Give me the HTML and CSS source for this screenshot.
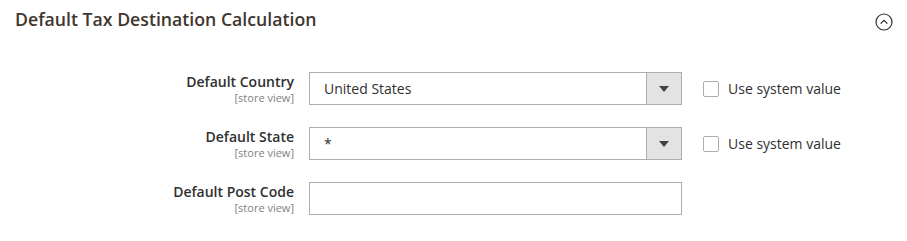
FILE: index.html
```html
<!DOCTYPE html>
<html>
<head>
    <link rel="stylesheet" href="styles.css">
</head>
<body>
    <div class="section">
        <div class="section-head">
            <span class="section-title">Default Tax Destination Calculation</span>
            <span class="collapse-icon">
                <svg width="18" height="18" viewBox="0 0 18 18">
                    <circle cx="9" cy="9" r="8" fill="none" stroke="#303030" stroke-width="1.2"/>
                    <path d="M5.6 10.6 L9 7.4 L12.4 10.6" fill="none" stroke="#303030" stroke-width="1.3"/>
                </svg>
            </span>
        </div>
        <div class="form-rows">
            <div class="row">
                <div class="label">
                    <span class="label-text">Default Country</span>
                    <span class="scope">[store view]</span>
                </div>
                <div class="control select">
                    <span class="value">United States</span>
                    <span class="select-btn"><span class="arrow"></span></span>
                </div>
                <label class="use-default">
                    <span class="checkbox"></span>
                    <span>Use system value</span>
                </label>
            </div>
            <div class="row">
                <div class="label">
                    <span class="label-text">Default State</span>
                    <span class="scope">[store view]</span>
                </div>
                <div class="control select">
                    <span class="value">*</span>
                    <span class="select-btn"><span class="arrow"></span></span>
                </div>
                <label class="use-default">
                    <span class="checkbox"></span>
                    <span>Use system value</span>
                </label>
            </div>
            <div class="row">
                <div class="label">
                    <span class="label-text">Default Post Code</span>
                    <span class="scope">[store view]</span>
                </div>
                <div class="control input"></div>
            </div>
        </div>
    </div>
</body>
</html>
```

FILE: styles.css
```css
body {
    margin: 0;
    background-color: rgb(255, 255, 255);
    font-family: "Open Sans", "Liberation Sans", sans-serif;
    color: rgb(48, 48, 48);
}
.section {
    width: 907px;
    height: 241px;
}
.section-head {
    display: flex;
    align-items: center;
    justify-content: space-between;
    padding: 7px 14px 0 15px;
    height: 24px;
}
.section-title {
    font-size: 17.7px;
    font-weight: 600;
    color: rgb(65, 54, 47);
}
.collapse-icon {
    display: flex;
    margin-top: 6px;
}
.form-rows {
    display: flex;
    flex-direction: column;
    gap: 22px;
    padding-top: 41px;
}
.row {
    display: flex;
    align-items: flex-start;
}
.label {
    width: 294px;
    display: flex;
    flex-direction: column;
    align-items: flex-end;
    padding-top: 1px;
}
.label-text {
    font-size: 14px;
    font-weight: 600;
    line-height: 18px;
}
.scope {
    font-size: 11px;
    line-height: 13px;
    color: rgb(128, 128, 128);
}
.control {
    margin-left: 15px;
    width: 373px;
    height: 33px;
    border: 1px solid rgb(173, 173, 173);
    box-sizing: border-box;
    background-color: rgb(255, 255, 255);
}
.select {
    display: flex;
    align-items: center;
    justify-content: space-between;
}
.value {
    padding-left: 14px;
    font-size: 14px;
}
.select-btn {
    width: 34px;
    height: 31px;
    border-left: 1px solid rgb(173, 173, 173);
    background-color: rgb(227, 227, 227);
    display: flex;
    align-items: center;
    justify-content: center;
}
.arrow {
    width: 0;
    height: 0;
    border-left: 5px solid transparent;
    border-right: 5px solid transparent;
    border-top: 6px solid rgb(65, 65, 65);
    margin-top: 1px;
}
.use-default {
    display: flex;
    align-items: center;
    margin-left: 21px;
    height: 33px;
    font-size: 14px;
    color: rgb(48, 48, 48);
}
.checkbox {
    width: 16px;
    height: 16px;
    border: 1px solid rgb(173, 173, 173);
    border-radius: 2px;
    box-sizing: border-box;
    margin-right: 9px;
}
```
